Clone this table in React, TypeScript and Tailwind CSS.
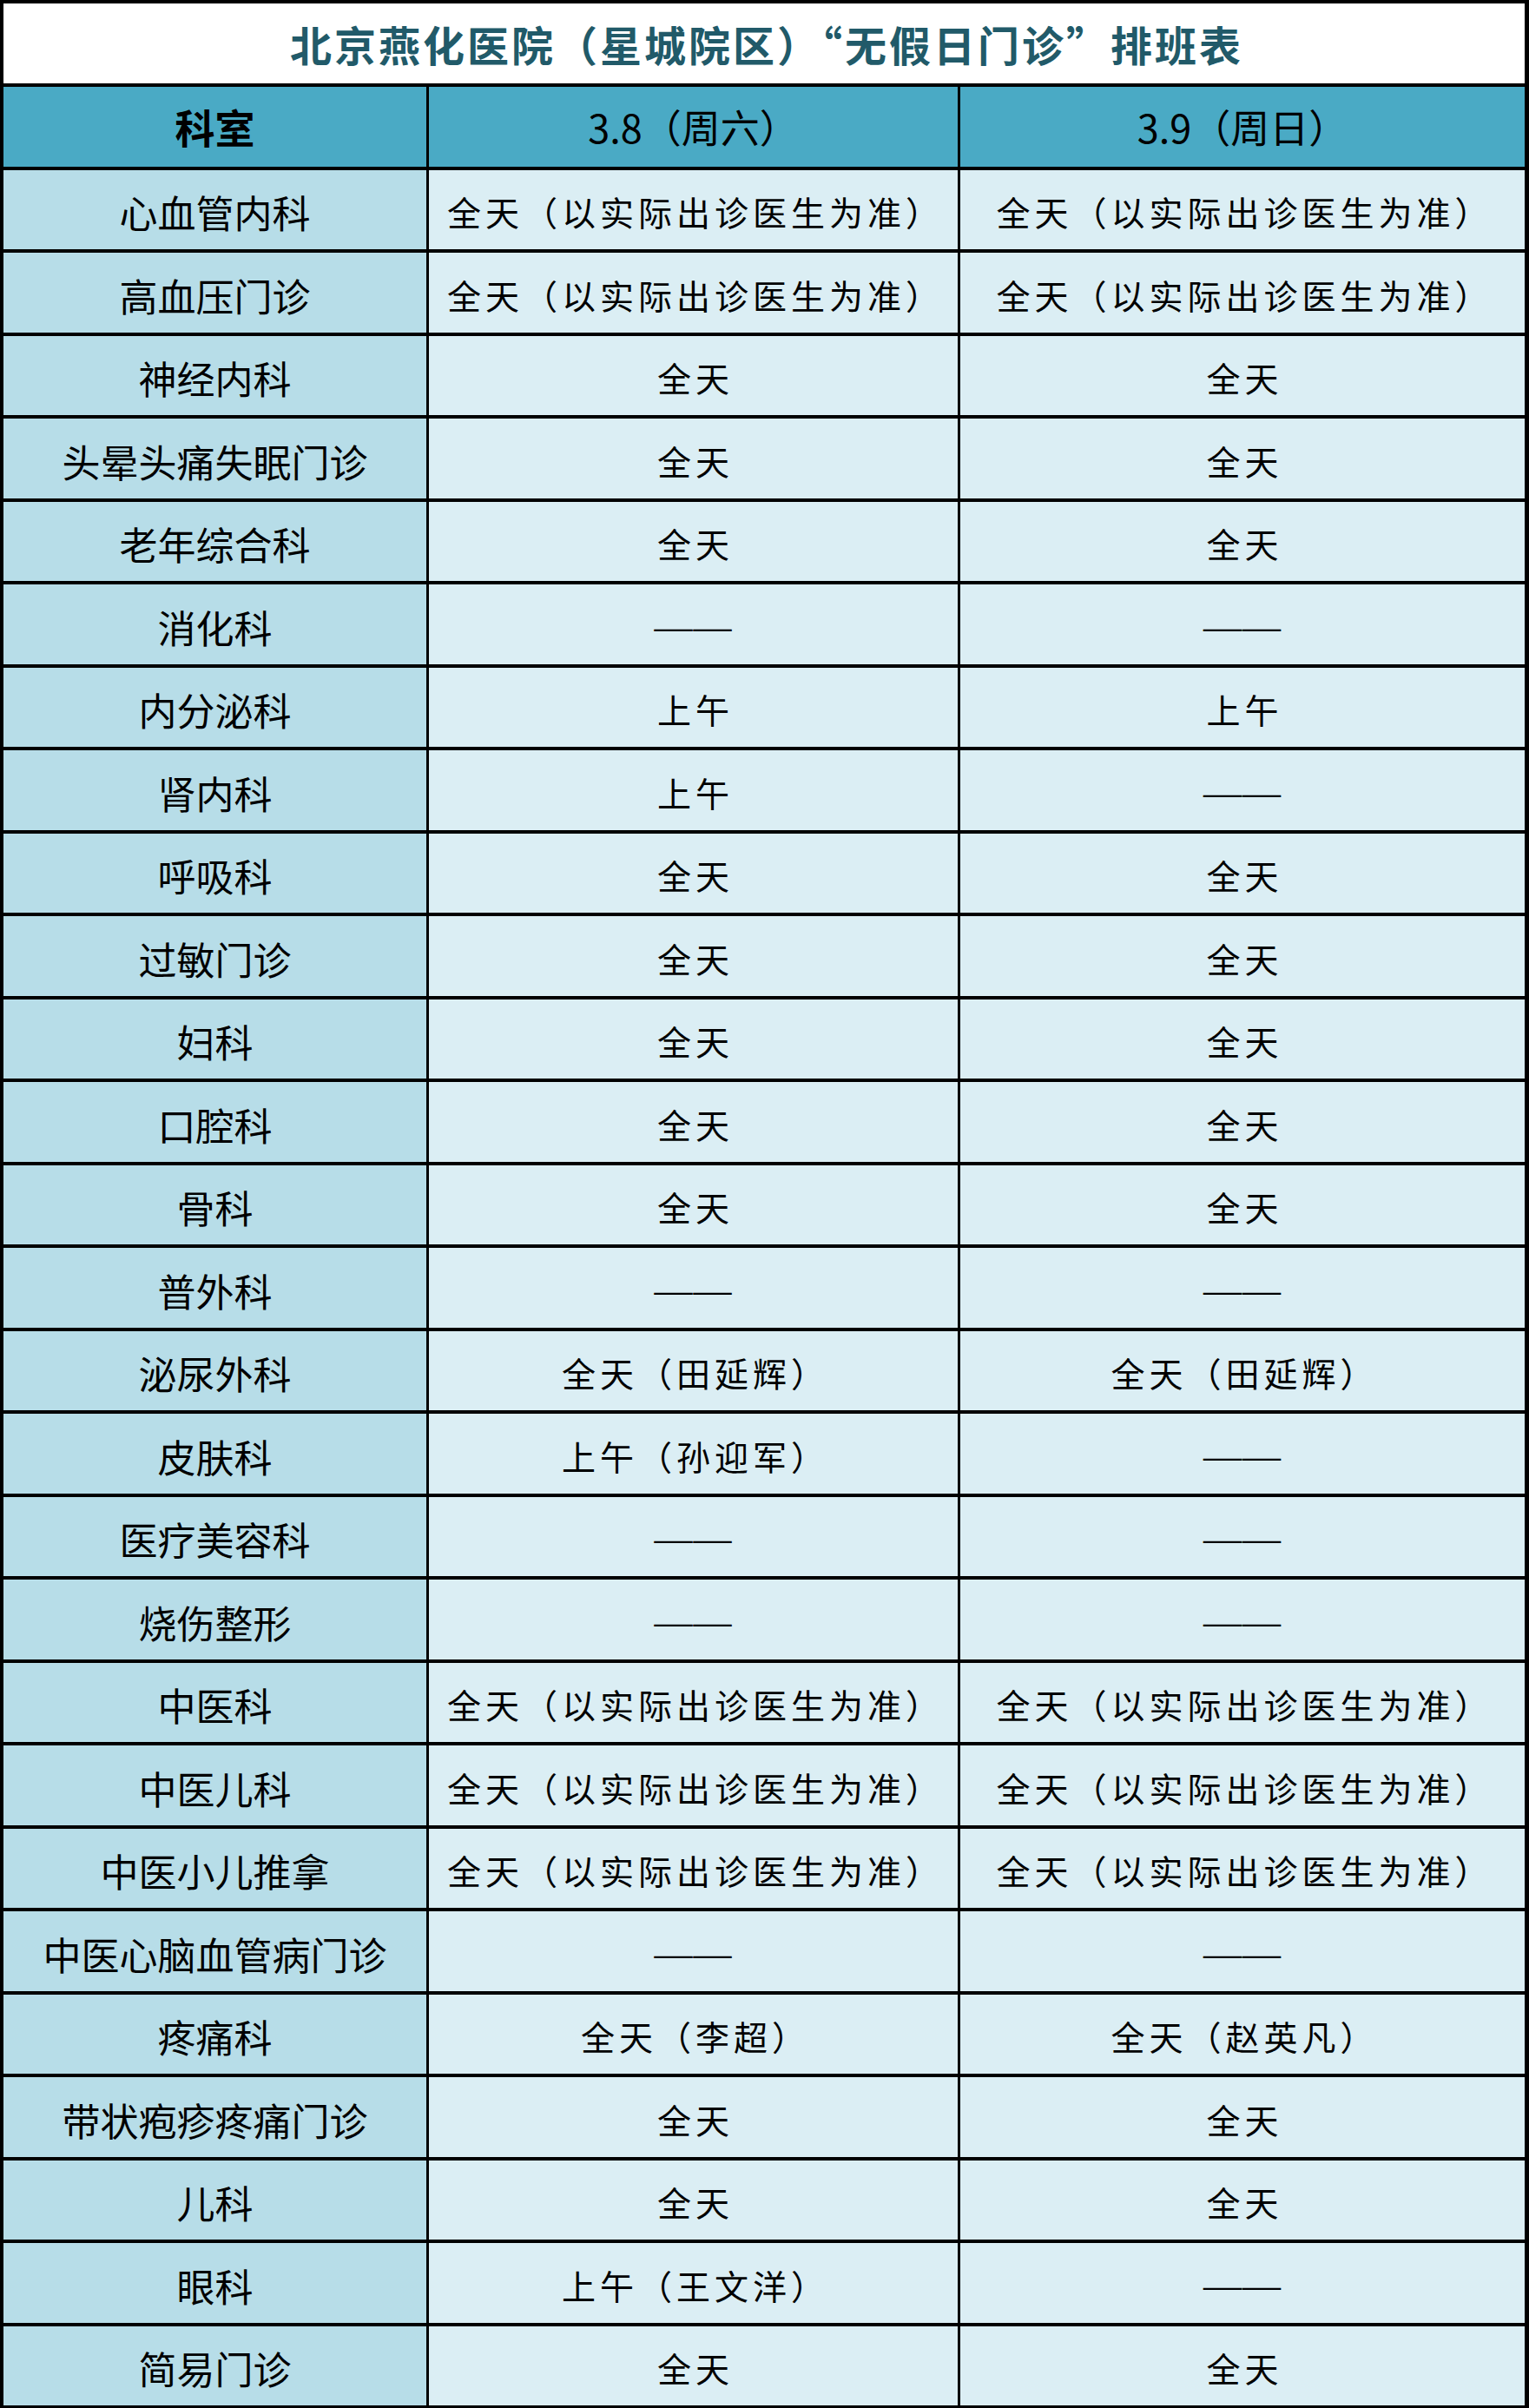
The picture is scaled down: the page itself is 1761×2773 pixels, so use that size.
import React from 'react';

type Row = { dept: string; sat: string; sun: string };

const FULL = '全天（以实际出诊医生为准）';
const NONE = '——';

const rows: Row[] = [
  { dept: '心血管内科', sat: FULL, sun: FULL },
  { dept: '高血压门诊', sat: FULL, sun: FULL },
  { dept: '神经内科', sat: '全天', sun: '全天' },
  { dept: '头晕头痛失眠门诊', sat: '全天', sun: '全天' },
  { dept: '老年综合科', sat: '全天', sun: '全天' },
  { dept: '消化科', sat: NONE, sun: NONE },
  { dept: '内分泌科', sat: '上午', sun: '上午' },
  { dept: '肾内科', sat: '上午', sun: NONE },
  { dept: '呼吸科', sat: '全天', sun: '全天' },
  { dept: '过敏门诊', sat: '全天', sun: '全天' },
  { dept: '妇科', sat: '全天', sun: '全天' },
  { dept: '口腔科', sat: '全天', sun: '全天' },
  { dept: '骨科', sat: '全天', sun: '全天' },
  { dept: '普外科', sat: NONE, sun: NONE },
  { dept: '泌尿外科', sat: '全天（田延辉）', sun: '全天（田延辉）' },
  { dept: '皮肤科', sat: '上午（孙迎军）', sun: NONE },
  { dept: '医疗美容科', sat: NONE, sun: NONE },
  { dept: '烧伤整形', sat: NONE, sun: NONE },
  { dept: '中医科', sat: FULL, sun: FULL },
  { dept: '中医儿科', sat: FULL, sun: FULL },
  { dept: '中医小儿推拿', sat: FULL, sun: FULL },
  { dept: '中医心脑血管病门诊', sat: NONE, sun: NONE },
  { dept: '疼痛科', sat: '全天（李超）', sun: '全天（赵英凡）' },
  { dept: '带状疱疹疼痛门诊', sat: '全天', sun: '全天' },
  { dept: '儿科', sat: '全天', sun: '全天' },
  { dept: '眼科', sat: '上午（王文洋）', sun: NONE },
  { dept: '简易门诊', sat: '全天', sun: '全天' },
];

const font = { fontFamily: '"Noto Sans CJK SC", "Noto Sans", sans-serif' };

const Value = ({ text }: { text: string }) =>
  text === NONE ? (
    <span className="font-['Liberation_Serif',serif] text-[44px] tracking-[1px] pt-[2px]">{text}</span>
  ) : (
    <span className="pl-[5px]">{text}</span>
  );

export default function App() {
  return (
    <div
      className="w-[1761px] h-[2773px] bg-white border-l-4 border-t-4 border-b-[3px] border-r-[5px] border-black flex flex-col"
      style={font}
    >
      {/* Title */}
      <div className="h-[92px] shrink-0 flex items-center justify-center">
        <h1 className="text-[48px] font-bold tracking-[3px] text-[#215a69] leading-none pl-[6px]">
          北京燕化医院（星城院区）“无假日门诊”排班表
        </h1>
      </div>

      {/* Header */}
      <div className="flex-1 flex border-t-[4px] border-black bg-[#4aaac5] text-black">
        <div className="w-[487px] shrink-0 flex items-center justify-center text-[46px] font-bold">
          科室
        </div>
        <div className="w-[612px] shrink-0 border-l-[3px] border-black flex items-center justify-center text-[45px]">
          3.8（周六）
        </div>
        <div className="flex-1 border-l-[3px] border-black flex items-center justify-center text-[45px]">
          3.9（周日）
        </div>
      </div>

      {rows.map((r) => (
        <div key={r.dept} className="flex-1 flex border-t-[4px] border-black text-black">
          <div className="w-[487px] shrink-0 bg-[#b7dde8] flex items-center justify-center text-[44px] pt-[6px]">
            {r.dept}
          </div>
          <div className="w-[612px] shrink-0 bg-[#dbeef4] border-l-[3px] border-black flex items-center justify-center text-[39px] tracking-[5px] pt-[4px]">
            <Value text={r.sat} />
          </div>
          <div className="flex-1 bg-[#dbeef4] border-l-[3px] border-black flex items-center justify-center text-[39px] tracking-[5px] pt-[4px]">
            <Value text={r.sun} />
          </div>
        </div>
      ))}
    </div>
  );
}
